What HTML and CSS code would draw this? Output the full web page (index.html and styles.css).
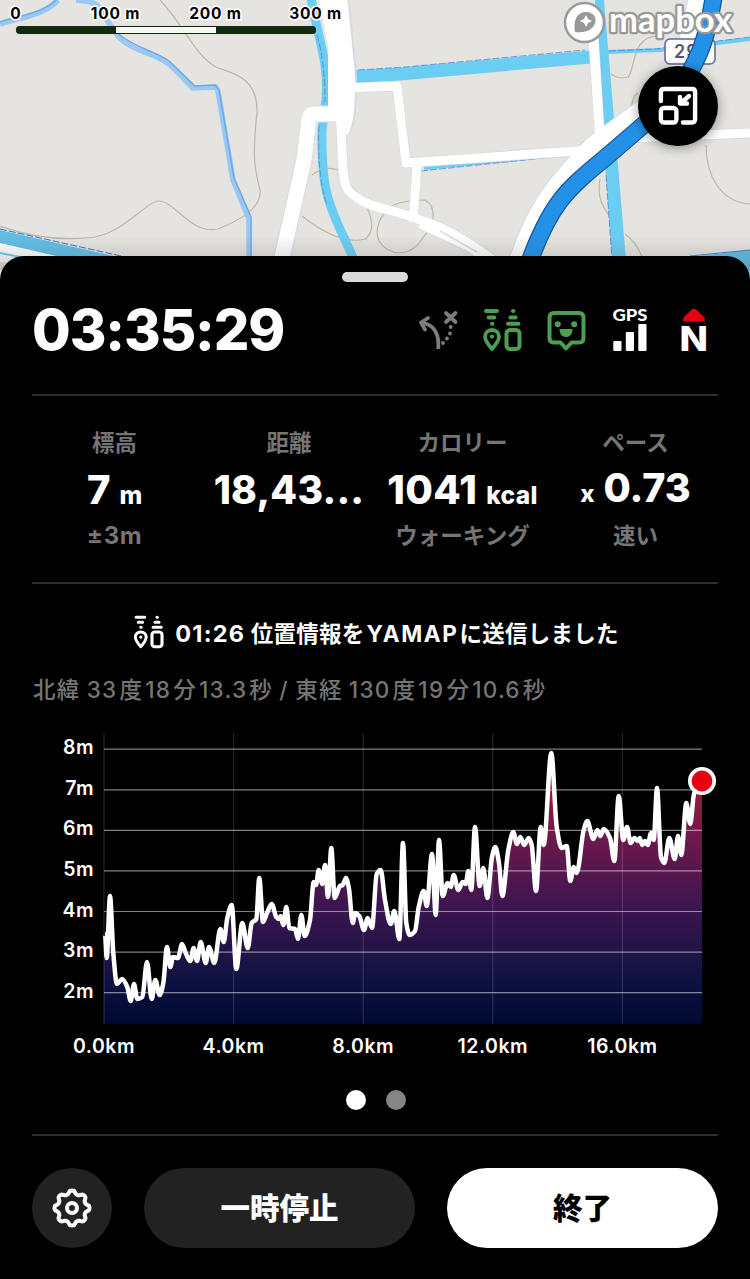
FILE: index.html
```html
<!DOCTYPE html>
<html lang="ja">
<head>
<meta charset="utf-8">
<title>YAMAP</title>
<link rel="stylesheet" href="styles.css">
</head>
<body>
<svg class="defs" width="0" height="0">
  <symbol id="beacon" viewBox="0 0 40 44">
    <g fill="none" stroke="currentColor" stroke-linecap="round">
      <path stroke-width="4" d="M4 3H15M6.700 9.400H12.300M10 15.800H10.400M31 3H31.400M28.400 9.400H33.600M26 15.800H36.500"/>
      <path stroke-width="3.800" stroke-linejoin="round" d="M10 22C5.500 22 3 25 3 28.800C3 33 10 41 10 41C10 41 17 33 17 28.800C17 25 14.500 22 10 22Z"/>
      <rect stroke-width="4" x="24.500" y="22" width="13" height="19" rx="3.500"/>
    </g>
    <circle cx="10" cy="28.600" r="2.100" fill="currentColor"/>
  </symbol>
</svg>
<main class="screen">
  <section class="map">
    <svg class="map-art" viewBox="0 0 750 290">
      <defs><linearGradient id="fade" x1="0" y1="0" x2="0" y2="1"><stop offset="0" stop-color="#555" stop-opacity="0"/><stop offset="1" stop-color="#444" stop-opacity=".25"/></linearGradient></defs>
      <rect width="750" height="290" fill="#e5e4e1"/>
      <g fill="none" stroke="#b9b8a8" stroke-width="1.200">
        <path d="M160 0C185 26 194 55 216 67C230 73 258 76 257 112C252 160 255 170 260 190C262 210 235 222 218 229C190 235 175 200 158 201C145 202 120 238 85 238C50 241 20 233 0 226"/>
        <path d="M302 216C330 238 350 243 365 239C378 230 371 204 349 184M312 175Q325 165 338 170M382 212C393 202 409 200 425 200C438 208 434 226 424 236C410 260 388 255 379 241C374 229 380 214 391 209"/>
        <path d="M660 36C630 35 636 70 628 77Q620 80 611 74M638 93Q632 96 631 112M706 145C706 175 720 202 750 204M600 179Q596 200 609 215M625 234Q637 242 644 262"/>
      </g>
      <g fill="none" stroke="#9bc8f2" stroke-width="5.500">
        <path d="M0 24C20 17 43 16 58 0M76 0Q91 1 97 5C108 20 113 32 122 40C139 54 151 51 169 64C180 73 188 84 193 88L216 87L218 91L233 180L249 219V262"/>
        <path stroke="#73a8e8" stroke-width="1.500" d="M0 22C20 15 43 14 58 -2M117 33C139 50 151 49 169 61L195 86L215 85L219 90L234 178L251 217V262"/>
      </g>
      <g fill="none" stroke="#6ccdf2">
        <path stroke-width="9" d="M311 -2C318 40 329 60 326 100L322 130C321 200 331 207 354 260"/>
        <path stroke-width="13" d="M350 77L400 74L590 57"/>
        <path fill="#6ccdf2" stroke="none" d="M595 0H604L626 260H612L603 135Z"/>
        <path stroke-width="4" d="M424 168L575 153M605 52L660 50L750 39"/>
      </g>
      <g fill="none" stroke="#5587d4" stroke-width=".8" stroke-dasharray="7 2"><path d="M358 70L405 67L585 50M609 51L655 49L750 37M421 171L573 155M317 35Q325 62 325 102M319 125Q317 175 327 205M606 175L612 260"/></g>
      <path d="M0 230L122 258H0Z" fill="#62bee5"/><path d="M0 229L121 256" stroke="#3973bd" stroke-dasharray="7 2"/><path d="M0 243L65 258V262H0Z" fill="#fff"/><path d="M0 253L30 259" stroke="#6ccdf2" stroke-width="2"/>
      <path d="M690 257L750 250V275H690Z" fill="#62bee5"/><path d="M690 256L750 250" stroke="#397ed0"/>
      <g fill="none" stroke-linejoin="round">
        <g stroke="#d9d9e1">
          <path stroke-width="24" d="M331 -2L340 45V105"/>
          <path stroke-width="11" d="M344 0L351 70Q353 120 345 132"/>
          <path stroke-width="17" d="M338 114L314 114Q308 114 308 126L304 160L281 262"/>
          <path stroke-width="10.500" d="M340 112C343 150 341 180 348 190C366 210 390 207 420 220Q450 228 493 260M420 224L470 247L488 260"/>
          <path stroke-width="10.500" d="M350 88L397 86L406 163L590 150L605 139L750 133M417 165L413 222M593 30L600 140"/>
          <path stroke-width="22" d="M699 -5C689 60 674 90 639 113L594 146C560 181 538 205 519 262"/>
        </g>
        <g stroke="#fff">
          <path stroke-width="22" d="M330 -2L339 45V118"/>
          <path stroke-width="9" d="M343 0L350 70Q352 120 344 132"/>
          <path stroke-width="15" d="M342 114L314 114Q308 114 308 126L304 160L281 262"/>
          <path stroke-width="9" d="M340 112C343 150 341 180 348 190C366 210 390 207 420 220Q450 228 493 260M420 224L470 247L488 260"/>
          <path stroke-width="9" d="M346 88L397 86L406 163L590 150L605 139L750 133M417 165L413 222"/>
          <path stroke-width="9.500" d="M593 30L600 140"/>
          <path stroke-width="20" d="M699 -5C689 60 674 90 639 113L594 146C560 181 538 205 519 262"/>
        </g>
        <path d="M440 231L477 252" stroke="#ddd" stroke-width="1.500"/>
      </g>
      <rect x="665" y="39" width="50" height="25" rx="5" fill="#fff" stroke="#5c648f" stroke-width="1.500"/><text x="674" y="58" class="shield-text">29</text>
      <path d="M714 -5C706 45 696 80 640 128L605 158C565 191 550 205 529 263" fill="none" stroke="#15559b" stroke-width="18"/>
      <path d="M714 -5C706 45 696 80 640 128L605 158C565 191 550 205 529 263" fill="none" stroke="#2491e8" stroke-width="15.500"/>
      <rect y="235" width="750" height="35" fill="url(#fade)"/>
      <circle cx="584.500" cy="22.500" r="19.500" fill="#fff" stroke="#999" stroke-width="2.500"/>
      <path d="M575 32C573 20 577 12 586 12C595 12 599 21 592 28C588 32 581 33 575 32Z" fill="#999"/>
      <path d="M586 15L588 19L592 21L588 23L586 27L584 23L580 21L584 19Z" fill="#fff"/>
      <text x="609" y="31.500" textLength="123" lengthAdjust="spacingAndGlyphs" class="mapbox">mapbox</text>
      <g class="scale-labels"><text x="16" y="19">0</text><text x="115.500" y="19">100 m</text><text x="215.500" y="19">200 m</text><text x="315.500" y="19">300 m</text></g>
      <rect x="16" y="26" width="300" height="8" rx="3.500" fill="#132a12"/><rect x="116" y="27" width="100" height="6" fill="#f6f7f1"/>
    </svg>
    <button class="shrink" aria-label="地図を縮小">
      <svg width="40" height="40" viewBox="0 0 40 40" fill="none" stroke="#fff" stroke-width="4.400" stroke-linecap="round" stroke-linejoin="round"><path d="M2.900 15V6Q2.900 3 6 3H34Q37.100 3 37.100 6V33Q37.100 36.500 34 36.500H25"/><rect x="2.900" y="22" width="15.500" height="14.500" rx="3"/><path d="M31 10L22.500 17.500M22 11V17.500H29"/></svg>
    </button>
  </section>
  <section class="sheet">
    <div class="handle"></div>
    <header class="top">
      <div class="time">03:35:29</div>
      <svg class="status" width="296" height="50" viewBox="418 305 296 50">
        <g fill="none" stroke="#7d7d7d" stroke-width="3.800" stroke-linecap="round" stroke-linejoin="round"><path stroke-linecap="butt" d="M438.300 349V343Q438 326 422 322.500"/><path d="M428 318L421 322.500L425 329.500M446 313L455.500 322M455.500 313L446 322M450.700 327V327.100M450 333.500V333.600M447 338.500V338.600M443 343V343.100"/></g>
        <use href="#beacon" x="482" y="308" width="40" height="44" color="#4c9e50"/>
        <path fill="none" stroke="#4c9e50" stroke-width="4" stroke-linejoin="round" d="M554 313H579Q583.500 313 583.500 318V338Q583.500 342.500 579 342.500H571.500L566 348.500L560.500 342.500H554Q549.500 342.500 549.500 338V318Q549.500 313 554 313Z"/>
        <g fill="#4c9e50"><circle cx="557.700" cy="324.200" r="3"/><circle cx="574.200" cy="324.200" r="3"/><path d="M559.500 329H572.500C572.500 334 570 337 566 337S559.500 334 559.500 329Z"/></g>
        <g fill="#fff"><text class="gps" x="612.500" y="321.300" textLength="35" lengthAdjust="spacingAndGlyphs">GPS</text><rect x="613.300" y="341" width="8.200" height="10" rx="1"/><rect x="625.800" y="332" width="8.200" height="19" rx="1"/><rect x="638.300" y="324" width="8.200" height="27" rx="1"/><text class="north" x="679.500" y="350.700" textLength="28.500" lengthAdjust="spacingAndGlyphs">N</text></g>
        <path fill="#e60012" d="M692 309.500Q694 308 696 309.500L704 317Q706.500 321.500 703 321.500H685Q681.500 321.500 684 317Z"/>
      </svg>
    </header>
    <div class="stats">
      <div class="stat"><span class="label">標高</span><span class="value">7<small>m</small></span><span class="label latin">±3m</span></div>
      <div class="stat"><span class="label">距離</span><span class="value dist">18,43...</span></div>
      <div class="stat"><span class="label">カロリー</span><span class="value kcal">1041<small>kcal</small></span><span class="label">ウォーキング</span></div>
      <div class="stat"><span class="label">ペース</span><span class="value pace"><small>x</small>0.73</span><span class="label">速い</span></div>
    </div>
    <div class="sent"><svg width="31" height="34" viewBox="0 0 40 44"><use href="#beacon" width="40" height="44"/></svg><span class="sent-text"><span class="clock">01:26</span> 位置情報を<span class="brand">YAMAP</span>に送信しました</span></div>
    <div class="coords">北緯 33<i></i>度<i></i>18<i></i>分<i></i>13.3<i></i>秒 / 東経 130<i></i>度<i></i>19<i></i>分<i></i>10.6<i></i>秒</div>
    <svg class="chart" viewBox="0 725 750 345">
      <defs><linearGradient id="area" gradientUnits="userSpaceOnUse" x1="0" y1="745" x2="0" y2="1025"><stop offset="0" stop-color="#c71827"/><stop offset=".3" stop-color="#74194a"/><stop offset=".58" stop-color="#3c1550"/><stop offset=".85" stop-color="#0d1240"/><stop offset="1" stop-color="#000830"/></linearGradient></defs>
      <path id="elevation-area" fill="url(#area)"/>
      <g id="grid"></g>
      <path id="elevation-line" fill="none" stroke="#fff" stroke-width="4.500" stroke-linejoin="round"/>
      <circle cx="702" cy="781" r="12.200" fill="#e60012" stroke="#fff" stroke-width="3.600"/>
    </svg>
    <div class="dots"><span class="dot"></span><span class="dot off"></span></div>
    <footer class="actions">
      <button class="gear" aria-label="設定"><svg width="44" height="44" viewBox="-22 -22 44 44" fill="none" stroke="#fff" stroke-width="4" stroke-linejoin="round"><path id="gear-shape"/><circle r="5"/></svg></button>
      <button class="pill">一時停止</button>
      <button class="pill light">終了</button>
    </footer>
  </section>
</main>
<script src="chart.js"></script>
</body>
</html>
```
FILE: styles.css
```css
* { box-sizing: border-box; }
body { margin: 0; background: #000; color: #fff; font-family: Inter, "Noto Sans CJK JP", sans-serif; }
button { border: 0; padding: 0; font: inherit; color: inherit; }
.defs { position: absolute; }
.screen { width: 750px; height: 1279px; overflow: hidden; display: flex; flex-direction: column; }
.map { position: relative; height: 256px; flex: none; }
.map-art { display: block; width: 750px; height: 290px; overflow: visible; }
.shield-text { font: 600 18px Inter, sans-serif; fill: #555b6d; letter-spacing: 1px; }
.mapbox { font: 700 34px Lato, sans-serif; fill: #fff; stroke: #999; stroke-width: 4.500px; paint-order: stroke; stroke-linejoin: round; }
.scale-labels { font: 700 15.500px Inter, sans-serif; letter-spacing: .8px; text-anchor: middle; fill: #000; stroke: #fff; stroke-width: 3px; paint-order: stroke; }
.shrink { position: absolute; left: 638px; top: 66px; width: 80px; height: 80px; border-radius: 50%; background: #000; box-shadow: 0 2px 12px #0006; display: grid; place-items: center; }
.sheet { position: relative; flex: 1; background: #000; border-radius: 24px 24px 0 0; display: flex; flex-direction: column; }
.handle { width: 66px; height: 10px; border-radius: 5px; background: #dadada; margin: 16px auto 0; flex: none; }
.top { height: 114px; margin: 0 32px; border-bottom: 2px solid #2e2e2e; display: flex; justify-content: space-between; padding: 23px 4px 0 0; flex: none; }
.time { font-size: 56px; font-weight: 800; line-height: 50px; letter-spacing: -1.100px; white-space: nowrap; }
.status { flex: none; overflow: visible; }
.gps { font: 900 17px Lato, sans-serif; }
.north { font: 800 34px Inter, sans-serif; }
.stats { height: 188px; margin: 0 32px; border-bottom: 2px solid #2e2e2e; padding-top: 30px; display: grid; grid-template-columns: 165px 184px 163px 183px; flex: none; }
.stat { display: flex; flex-direction: column; align-items: center; min-width: 0; }
.label { font-size: 22.500px; line-height: 34px; height: 34px; font-weight: 700; color: #757575; white-space: nowrap; }
.value { height: 59px; line-height: 59px; font-size: 40px; font-weight: 800; white-space: nowrap; }
.value small { font-size: 24.500px; font-weight: 800; margin-left: 9px; }
.value.pace { margin-top: -1px; height: 60px; font-size: 39.500px; }
.value.pace small { font-size: 24px; margin: 0 9px 0 0; }
.value.dist { font-size: 39px; letter-spacing: .2px; }
.kcal { letter-spacing: .3px; }
.latin { font-size: 24px; letter-spacing: .6px; }
.sent { height: 96px; display: flex; justify-content: center; align-items: center; gap: 11px; padding-left: 2px; flex: none; }
.sent-text { font-size: 22.500px; font-weight: 700; white-space: nowrap; letter-spacing: .25px; }
.clock { font-size: 23.500px; letter-spacing: 1.200px; }
.brand { letter-spacing: 1.600px; margin: 0 1px 0 2px; }
.coords { height: 45px; line-height: 20px; padding: 0 33px; font-size: 22.500px; font-weight: 500; color: #757575; white-space: nowrap; flex: none; letter-spacing: 1.250px; word-spacing: -1px; }
.coords i { display: inline-block; width: 2px; }
.chart { width: 750px; height: 345px; flex: none; }
.axis { font: 600 19.500px Inter, sans-serif; fill: #fff; letter-spacing: .5px; }
.dots { height: 66px; padding-top: 20px; margin: 0 32px; border-bottom: 2px solid #2e2e2e; display: flex; justify-content: center; gap: 20px; padding-left: 2px; flex: none; }
.dot { width: 20px; height: 20px; border-radius: 50%; background: #fff; }
.off { background: #858585; }
.actions { display: grid; grid-template-columns: 80px 271px 271px; gap: 32px; padding: 32px 32px 0; }
.gear, .pill { height: 80px; border-radius: 40px; background: #222; display: grid; place-items: center; }
.pill { font-size: 29.500px; font-weight: 800; padding-bottom: 4px; }
.light { background: #fff; color: #000; }
```
FILE: chart.js
```js
const points = [
105,934,106.7,958,110,896,113.3,953,117,984,122,979,127.3,987,130.7,1001,134,984,137.3,999,142.3,997,147,962,151.7,999,155.3,980,159.7,995,163.3,983,167,947,170.3,967,173,957,178,958,182,944,185.7,953,190.3,961,193.7,948,197,961,200.7,942,205.7,963,209,947,214.3,963,220.3,929,223.7,942,227.3,918,231.7,905,236.3,969,242.3,923,247.7,948,251.7,923,256.3,919,259.3,878,263,922,267,913,271.7,904,276.3,917,279,919,280.7,916,283.3,925,286.3,907,289.3,928,295,929,298,939,301.3,915,304.7,936,310,920,313.7,882,316,885,318.7,870,322.3,884,325,865,328,897,331.3,848,334.7,898,340,886,342.7,885,346,878,349,889,352.7,923,355.3,913,359.3,916,364,930,367.7,918,372,928,376.7,874,380.7,870,385,900,390.7,924,394.3,911,399.3,939,403,843,406.3,923,409.7,935,415,931,418.7,907,423.7,891,426.7,906,432,854,435.7,915,439,840,442.7,896,447.7,883,450.7,887,453.7,875,458.3,890,462.7,882,465.7,884,468.3,871,471.3,890,475,827,479.7,886,483.3,868,487.3,898,492,857,495.3,847,499,863,502.3,896,508.3,850,513.3,832,517,844,520.3,837,524.3,845,528.7,838,531.7,845,536,891,540.7,827,543.7,845,551.3,753,556.7,827,561.7,848,566.7,846,570.3,881,573.7,867,576.7,873,583.7,830,587.3,821,593.3,839,597.3,830,600.3,836,603.7,829,610,838,614.3,861,618.7,796,623.3,840,627,827,630.7,843,634.3,838,637.7,841,639.7,838,642.3,845,645,841,647.7,845,651,833,653.7,840,657,788,661,857,664.3,863,669.3,838,674.7,859,678,836,681.3,855,686.3,803,690.3,824,694,794,702,781
];
const pts = [];
for (let i = 0; i < points.length; i += 2) pts.push([points[i], points[i + 1]]);

// Monotone cubic interpolation: flat tangents at local peaks and valleys
const slope = (a, b) => (b[1] - a[1]) / (b[0] - a[0]);
const tangent = pts.map((p, i) => {
  if (i === 0 || i === pts.length - 1) return 0;
  const l = slope(pts[i - 1], p), r = slope(p, pts[i + 1]);
  return l * r <= 0 ? 0 : 2 * l * r / (l + r);
});
let line = `M${pts[0]}`;
for (let i = 1; i < pts.length; i++) {
  const a = pts[i - 1], b = pts[i], h = (b[0] - a[0]) / 3;
  line += `C${a[0] + h},${a[1] + h * tangent[i - 1]} ${b[0] - h},${b[1] - h * tangent[i]} ${b}`;
}
document.getElementById('elevation-line').setAttribute('d', line);
document.getElementById('elevation-area').setAttribute('d', line + 'V1024H104V934Z');

let grid = '';
for (let m = 2; m <= 8; m++) {
  const y = 749.2 + (8 - m) * 40.58;
  grid += `<path d="M104 ${y}H702" stroke="#fff" stroke-opacity=".5" stroke-width="1.2"/><text class="axis" x="94" y="${y + 5}" text-anchor="end">${m}m</text>`;
}
for (let k = 0; k <= 4; k++) {
  const x = 104 + k * 129.6;
  grid += `<path d="M${x} 733V1024" stroke="#fff" stroke-opacity=".14" stroke-width="1.2"/><text class="axis" x="${x}" y="1053" text-anchor="middle">${k * 4}.0km</text>`;
}
document.getElementById('grid').innerHTML = grid;

// Eight-lobed cog outline
let cog = '';
for (let i = 0; i <= 96; i++) {
  const t = i / 96 * Math.PI * 2, r = 15.8 + 1.8 * Math.tanh(1.6 * Math.cos(8 * t));
  cog += `${i ? 'L' : 'M'}${r * Math.sin(t)} ${-r * Math.cos(t)}`;
}
document.getElementById('gear-shape').setAttribute('d', cog + 'Z');
```
